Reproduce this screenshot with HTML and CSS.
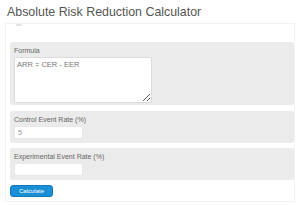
FILE: index.html
```html
<!DOCTYPE html>
<html lang="en">
<head>
    <meta charset="UTF-8">
    <meta name="viewport" content="width=device-width, initial-scale=1.0">
    <title>Absolute Risk Reduction Calculator</title>
    <link rel="stylesheet" href="styles.css">
</head>
<body>
    <h1 class="title">Absolute Risk Reduction Calculator</h1>
    <div class="wrapper">
        <div class="tab"></div>
        <div class="panel panel--formula">
            <label class="label">Formula</label>
            <textarea class="formula" readonly>ARR = CER - EER</textarea>
        </div>
        <div class="panel">
            <label class="label">Control Event Rate (%)</label>
            <input class="field" type="text" value="5">
        </div>
        <div class="panel">
            <label class="label">Experimental Event Rate (%)</label>
            <input class="field" type="text" value="">
        </div>
        <button class="btn">Calculate</button>
    </div>
</body>
</html>
```

FILE: styles.css
```css
*{
    padding: 0;
    margin: 0;
    box-sizing: border-box;
}
body{
    font-family: "Liberation Sans", Arial, sans-serif;
    background-color: #fff;
}
.title{
    margin: 5px 0 0 7px;
    font-size: 12.4px;
    line-height: 14px;
    font-weight: normal;
    color: #555;
}
.wrapper{
    margin: 4px 5px 0 5px;
    border: 1px solid #f2f2f2;
    padding: 0 0 4px 4px;
    display: flex;
    flex-direction: column;
    align-items: flex-start;
}
.tab{
    width: 6px;
    height: 2px;
    margin: 0 0 16px 6px;
    background-color: #e2e2e2;
    border-radius: 1px;
}
.panel{
    align-self: stretch;
    display: flex;
    flex-direction: column;
    align-items: flex-start;
    gap: 2px;
    background-color: #ebebeb;
    border-radius: 3px;
    padding: 5px 4px 4px;
    margin-bottom: 5px;
}
.panel--formula{
    padding-bottom: 2px;
    margin-bottom: 6px;
}
.label{
    font-size: 7px;
    line-height: 8px;
    color: #666;
}
.formula{
    width: 138px;
    height: 46px;
    font-family: "Liberation Sans", Arial, sans-serif;
    font-size: 7.5px;
    line-height: 9px;
    color: #777;
    padding: 2px 2px;
    border: 1px solid #dcdcdc;
    border-radius: 2px;
    background-color: #fff;
}
.field{
    width: 69px;
    height: 13px;
    font-family: "Liberation Sans", Arial, sans-serif;
    font-size: 7.5px;
    color: #999;
    padding: 0 3px;
    border: 1px solid #e8e8e8;
    border-radius: 2px;
    background-color: #fff;
}
.btn{
    width: 43px;
    height: 12px;
    font-family: "Liberation Sans", Arial, sans-serif;
    font-size: 6px;
    color: #fff;
    background-color: #1b8fd6;
    border: 1px solid #1479b8;
    border-radius: 3px;
    cursor: pointer;
}
```
